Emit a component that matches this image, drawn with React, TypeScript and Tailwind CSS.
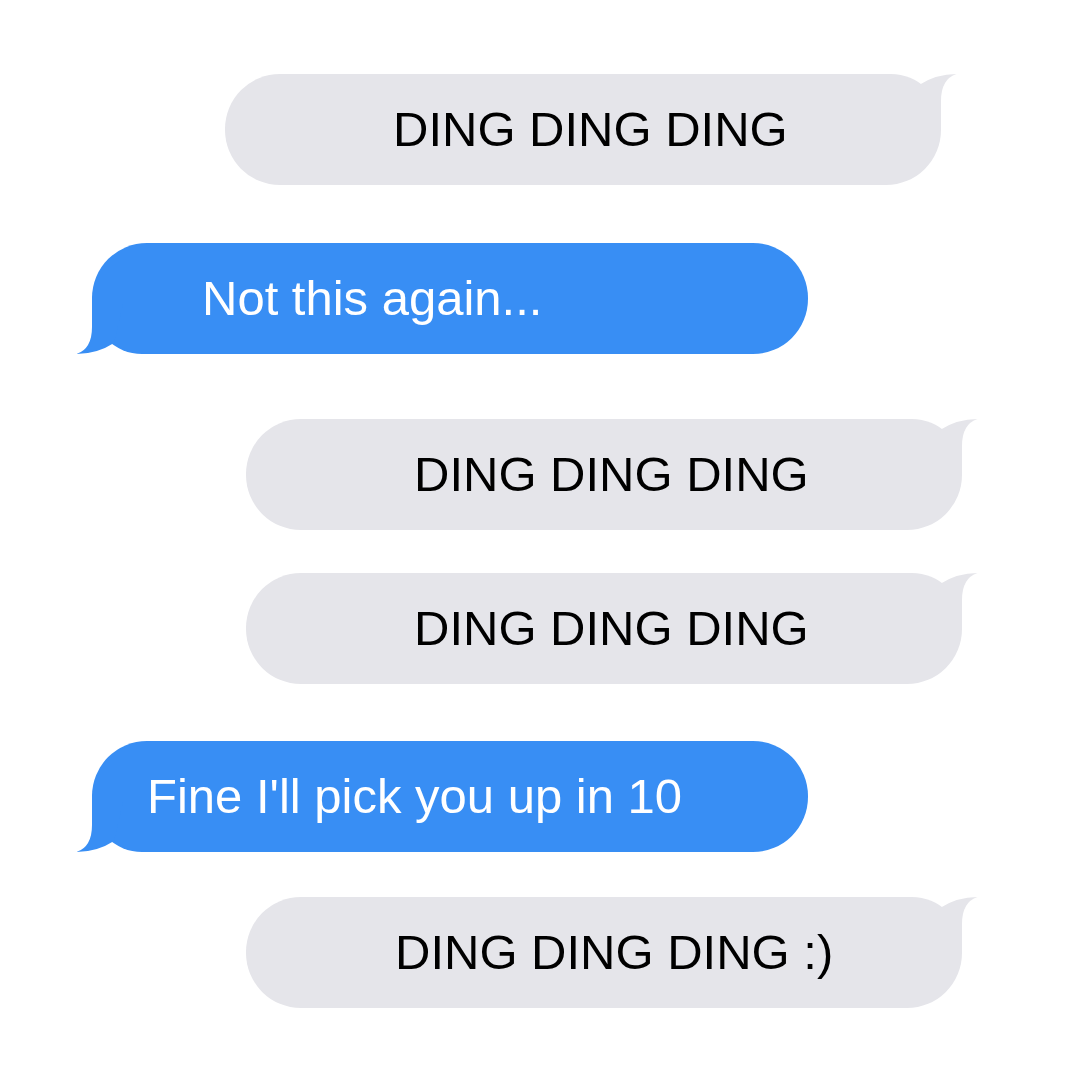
import React from 'react';

type Msg = { text: string; from: 'them' | 'me'; ml: string; mt: string; pl: string };

const messages: Msg[] = [
  { text: 'DING DING DING', from: 'them', ml: 'ml-[225px]', mt: 'mt-[74px]', pl: 'pl-[168px]' },
  { text: 'Not this again...', from: 'me', ml: 'ml-[92px]', mt: 'mt-[58px]', pl: 'pl-[110px]' },
  { text: 'DING DING DING', from: 'them', ml: 'ml-[246px]', mt: 'mt-[65px]', pl: 'pl-[168px]' },
  { text: 'DING DING DING', from: 'them', ml: 'ml-[246px]', mt: 'mt-[43px]', pl: 'pl-[168px]' },
  { text: "Fine I'll pick you up in 10", from: 'me', ml: 'ml-[92px]', mt: 'mt-[57px]', pl: 'pl-[55px]' },
  { text: 'DING DING DING :)', from: 'them', ml: 'ml-[246px]', mt: 'mt-[45px]', pl: 'pl-[149px]' },
];

function Tail({ color, className }: { color: string; className: string }) {
  return (
    <svg className={className} width="58" height="50" viewBox="0 0 58 50">
      <path d="M20 11 Q37 0 57.5 0 Q42 5 42 27 L42 50 L11 50 Z" fill={color} />
    </svg>
  );
}

function Bubble({ msg }: { msg: Msg }) {
  const mine = msg.from === 'me';
  return (
    <div
      className={`relative w-[716px] h-[111px] flex items-center ${msg.ml} ${msg.mt} ${msg.pl} ${
        mine
          ? 'bg-[#388ef4] text-white rounded-[55px] rounded-bl-[50px]'
          : 'bg-[#e5e5ea] text-black rounded-[55px] rounded-tr-[50px]'
      }`}
    >
      {mine ? (
        <Tail color="#388ef4" className="absolute left-[-16px] bottom-0 rotate-180" />
      ) : (
        <Tail color="#e5e5ea" className="absolute left-[674px] top-0" />
      )}
      <span className="relative text-[49px] leading-none whitespace-nowrap">{msg.text}</span>
    </div>
  );
}

export default function App() {
  return (
    <div
      className="w-[1080px] h-[1080px] bg-white overflow-hidden flex flex-col"
      style={{ fontFamily: '"Liberation Sans", Arial, sans-serif' }}
    >
      {messages.map((m, i) => (
        <Bubble key={i} msg={m} />
      ))}
    </div>
  );
}
